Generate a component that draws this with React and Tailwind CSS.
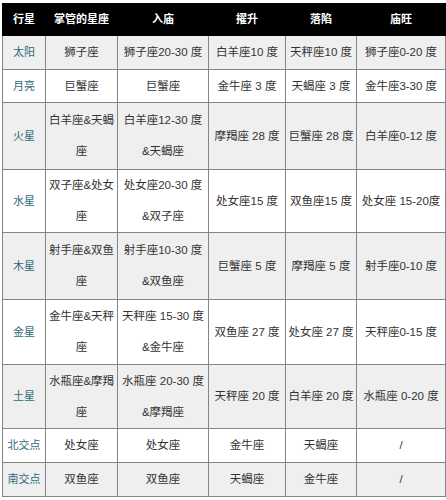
import React from 'react';

const rows = [
  { name: '太阳', h: 'h-[34px]', cells: [['狮子座'], ['狮子座20-30 度'], ['白羊座10 度'], ['天秤座10 度'], ['狮子座0-20 度']] },
  { name: '月亮', h: 'h-[33px]', cells: [['巨蟹座'], ['巨蟹座'], ['金牛座 3 度'], ['天蝎座 3 度'], ['金牛座3-30 度']] },
  { name: '火星', h: 'h-[67px]', cells: [['白羊座&天蝎', '座'], ['白羊座12-30 度', '&天蝎座'], ['摩羯座 28 度'], ['巨蟹座 28 度'], ['白羊座0-12 度']] },
  { name: '水星', h: 'h-[63px]', cells: [['双子座&处女', '座'], ['处女座20-30 度', '&双子座'], ['处女座15 度'], ['双鱼座15 度'], ['处女座 15-20度']] },
  { name: '木星', h: 'h-[67px]', cells: [['射手座&双鱼', '座'], ['射手座10-30 度', '&双鱼座'], ['巨蟹座 5 度'], ['摩羯座 5 度'], ['射手座0-10 度']] },
  { name: '金星', h: 'h-[65px]', cells: [['金牛座&天秤', '座'], ['天秤座 15-30 度', '&金牛座'], ['双鱼座 27 度'], ['处女座 27 度'], ['天秤座0-15 度']] },
  { name: '土星', h: 'h-[64px]', cells: [['水瓶座&摩羯', '座'], ['水瓶座 20-30 度', '&摩羯座'], ['天秤座 20 度'], ['白羊座 20 度'], ['水瓶座 0-20 度']] },
  { name: '北交点', h: 'h-[34px]', cells: [['处女座'], ['处女座'], ['金牛座'], ['天蝎座'], ['/']] },
  { name: '南交点', h: 'h-[34px]', cells: [['双鱼座'], ['双鱼座'], ['天蝎座'], ['金牛座'], ['/']] },
];

const headers = ['行星', '掌管的星座', '入庙', '擢升', '落陷', '庙旺'];

export default function App() {
  return (
    <div
      className="bg-white w-[446px] h-[500px] pt-[3px] pl-[2px]"
      style={{ fontFamily: '"Liberation Sans", "Noto Sans CJK SC", sans-serif' }}
    >
      <table className="table-fixed border-collapse w-[443px] text-[11.5px] text-[#333]">
        <colgroup>
          <col className="w-[43px]" />
          <col className="w-[72px]" />
          <col className="w-[91px]" />
          <col className="w-[77px]" />
          <col className="w-[71px]" />
          <col className="w-[89px]" />
        </colgroup>
        <thead>
          <tr className="h-[32px] bg-black text-white">
            {headers.map((t) => (
              <th key={t} className="font-bold text-[11px] text-center align-middle p-0 border border-black">
                {t}
              </th>
            ))}
          </tr>
        </thead>
        <tbody>
          {rows.map((r, i) => (
            <tr key={r.name} className={`${r.h} ${i % 2 === 0 ? 'bg-[#efefef]' : 'bg-white'}`}>
              <td className="border border-[#858585] text-center align-middle p-0 text-[11px] text-[#2d6b78] leading-none">{r.name}</td>
              {r.cells.map((lines, j) => (
                <td key={j} className="border border-[#858585] text-center align-middle p-0 leading-[31px] whitespace-nowrap">
                  {lines.map((l, k) => (
                    <div key={k}>{l}</div>
                  ))}
                </td>
              ))}
            </tr>
          ))}
        </tbody>
      </table>
    </div>
  );
}
